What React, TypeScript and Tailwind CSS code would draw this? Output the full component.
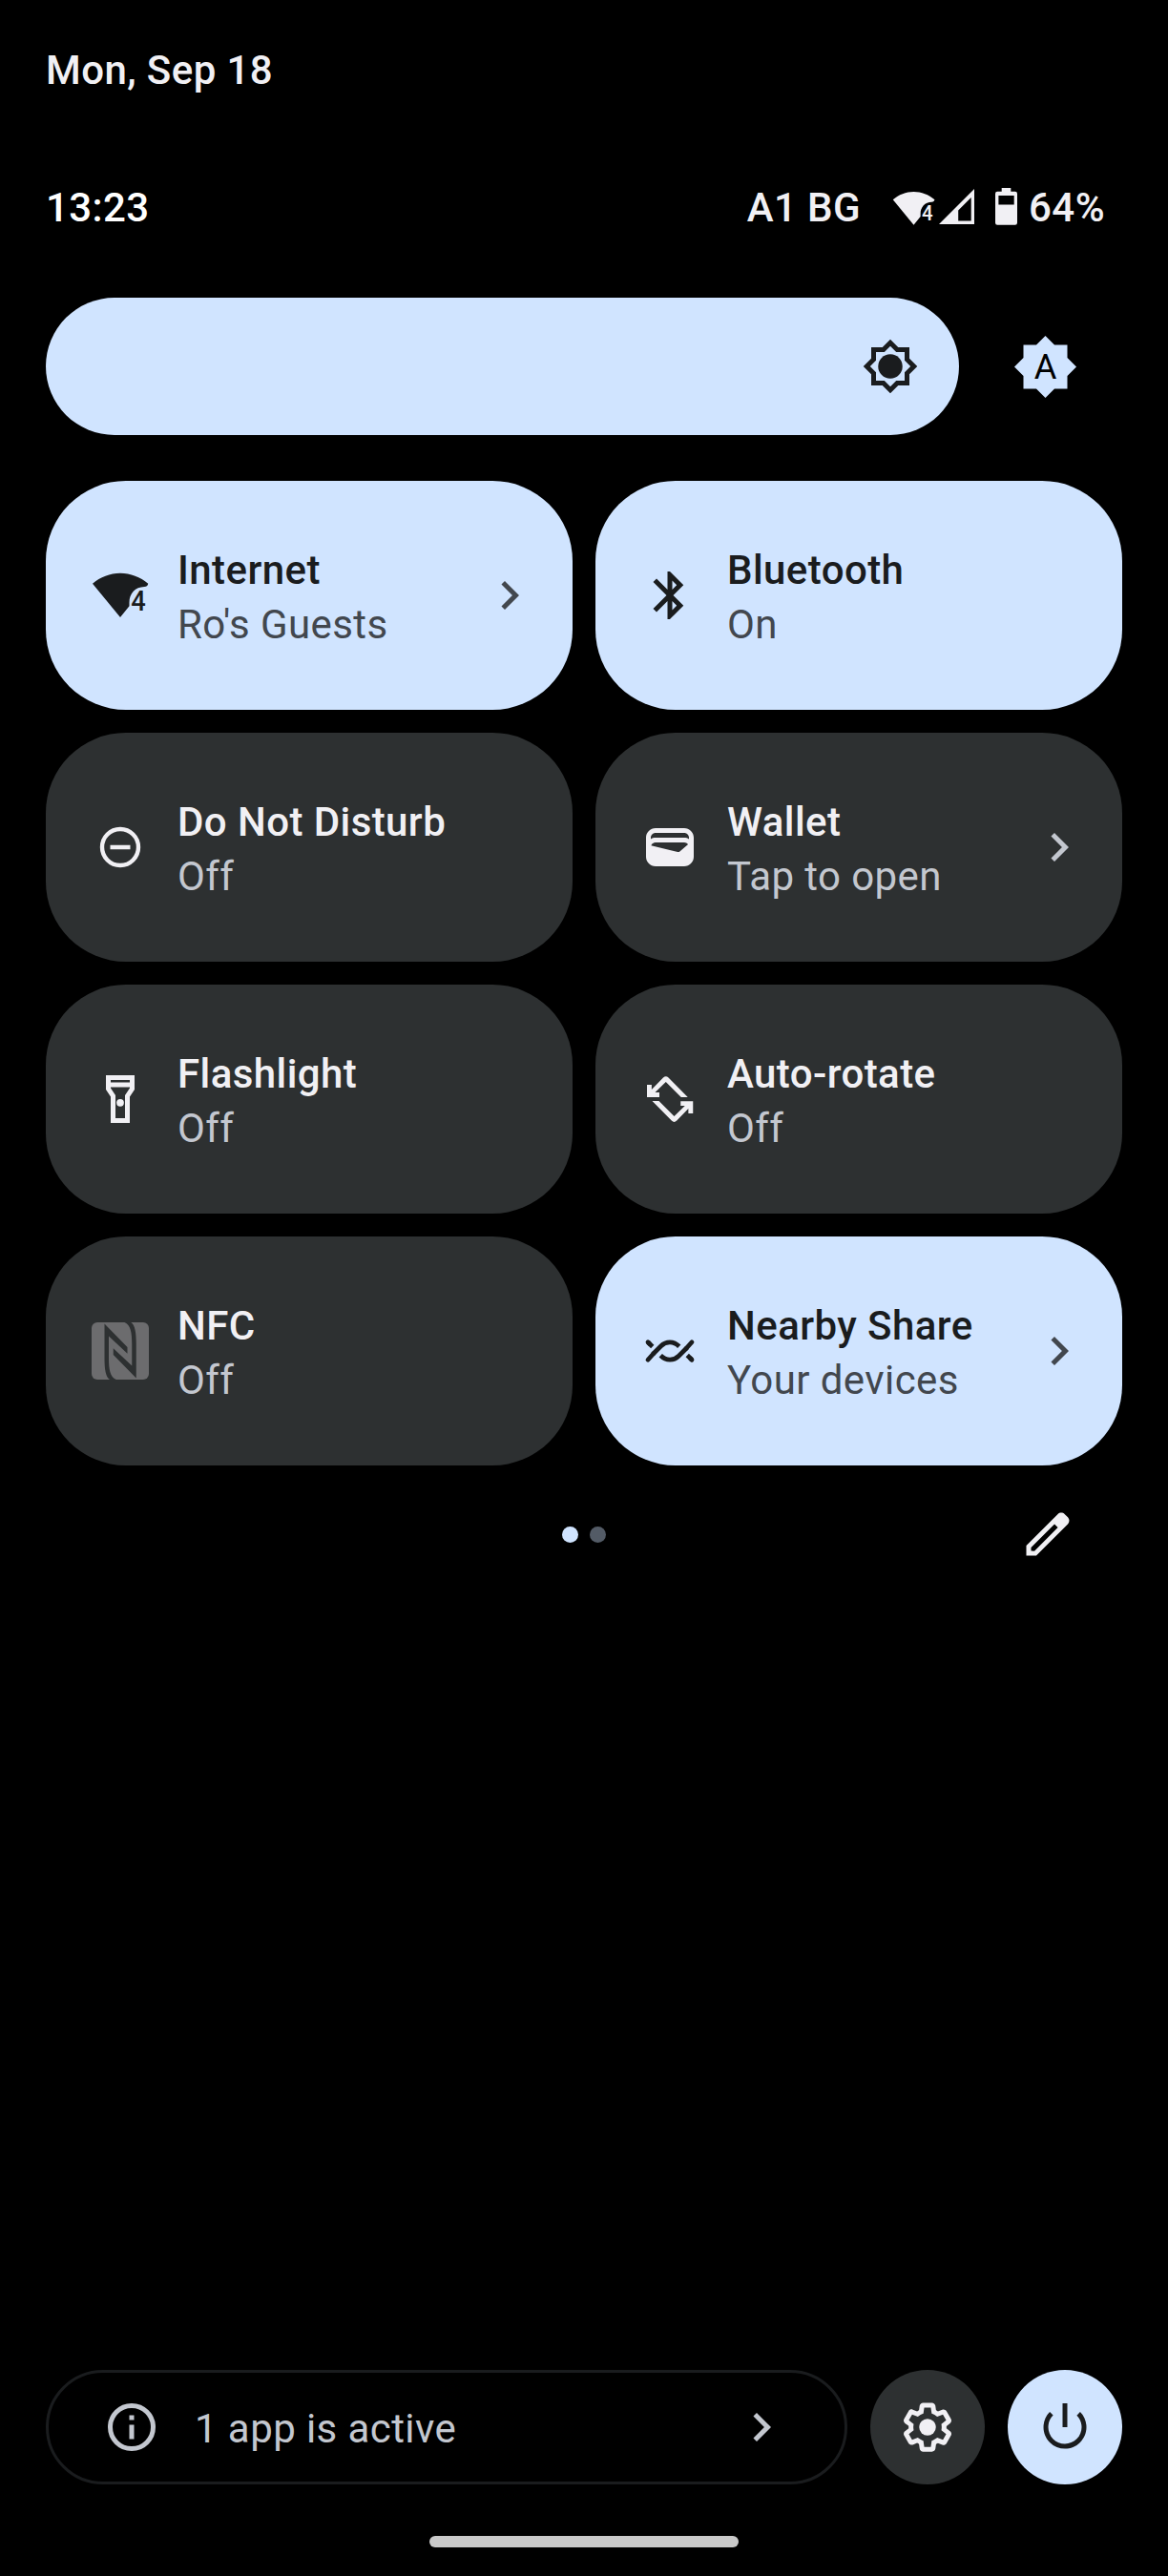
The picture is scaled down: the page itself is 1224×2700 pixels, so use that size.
import { ReactNode } from "react";
import clsx from "clsx";

type IconProps = { className?: string };

function Icon({ children, className = "size-[60px]" }: { children: ReactNode; className?: string }) {
  return (
    <svg viewBox="0 0 24 24" fill="currentColor" className={clsx("shrink-0", className)}>
      {children}
    </svg>
  );
}

function WifiIcon({ className }: IconProps) {
  return (
    <Icon className={className}>
      <path d="M12 21.2.4 7.1C3.7 4.3 7.7 2.7 12 2.7s8.4 1.6 11.7 4.4c-.2.9-.7 1.3-1.6 1.3-3.8.1-6.3 2.8-6.3 6.6v1.5z" />
      <text x="16.5" y="18.4" fontSize="11.6" fontWeight="500" fontFamily="Roboto, sans-serif" letterSpacing="0" textLength="6.2" lengthAdjust="spacingAndGlyphs">
        4
      </text>
    </Icon>
  );
}

function BluetoothIcon() {
  return (
    <Icon>
      <path d="M17.71 7.71 12 2h-1v7.59L6.41 5 5 6.41 10.59 12 5 17.59 6.41 19 11 14.41V22h1l5.71-5.71-4.3-4.29zM13 5.83l1.88 1.88L13 9.59zm1.88 10.46L13 18.17v-3.76z" />
    </Icon>
  );
}

function DndIcon() {
  return (
    <Icon>
      <circle cx="12" cy="12" r="7.6" fill="none" stroke="currentColor" strokeWidth="1.75" />
      <path d="M7.8 11.1h8.4v1.8H7.8z" />
    </Icon>
  );
}

function WalletIcon() {
  return (
    <Icon>
      <path d="M18 4H6C3.79 4 2 5.79 2 8v8c0 2.21 1.79 4 4 4h12c2.21 0 4-1.79 4-4V8C22 5.79 20.21 4 18 4zM16.14 13.77c-.24.2-.57.28-.88.2L4.15 11.25C4.45 10.52 5.16 10 6 10h12c.67 0 1.26.34 1.63.84zM6 6h12c1.1 0 2 .9 2 2v.55C19.41 8.21 18.73 8 18 8H6c-.73 0-1.41.21-2 .55V8C4 6.9 4.9 6 6 6z" />
    </Icon>
  );
}

function FlashlightIcon() {
  return (
    <Icon>
      <path d="M18 2H6v6l2 3v11h8V11l2-3zm-2 2v1H8V4zm-2 6.4V20h-4v-9.61l-2-3V7h8v.39z" />
      <circle cx="12" cy="13.5" r="1.55" />
    </Icon>
  );
}

function RotateIcon() {
  const half = "M2.4 6h1.95v2L9.2 3q1.1-1.1 2.2 0l8.1 8.2h-2.8l-6.4-6.4-4.5 4.4h1.8v1.95H2.4z";
  return (
    <Icon>
      <path d={half} />
      <path d={half} transform="rotate(180 12.05 12)" />
    </Icon>
  );
}

function NfcIcon() {
  const half = "M5.4.6 15 10.4v2.7L7.2 5.8V15c0 4.5.5 8 3.1 9H7.6C5.9 23 5.4 19.5 5.4 15z";
  return (
    <Icon>
      <rect width="24" height="24" rx="2.4" className="fill-[#6c6c6e]" />
      <g className="fill-[#2d3031]">
        <path d={half} />
        <path d={half} transform="rotate(180 12.05 12)" />
      </g>
    </Icon>
  );
}

function NearbyIcon() {
  return (
    <Icon>
      <g fill="none" stroke="currentColor" strokeWidth="1.9">
        <path d="M4.8 13.4 8.3 9.9c2.1-2.1 5.3-2.1 7.6.2M19.2 10.6l-3.5 3.5c-2.1 2.1-5.3 2.1-7.6-.2M2.8 8.3l1.9 1.9M21.2 15.7l-1.9-1.9" />
        <path strokeLinecap="round" d="m2.8 15.7 2.5-2.8M21.2 8.3l-2.5 2.8M2.8 8.3l.6.6M21.2 15.7l-.6-.6" />
      </g>
    </Icon>
  );
}

function ChevronIcon() {
  return (
    <Icon>
      <path d="M10 6 8.59 7.41 13.17 12l-4.58 4.59L10 18l6-6z" />
    </Icon>
  );
}

function BrightnessIcon() {
  return (
    <Icon>
      <path
        fillRule="evenodd"
        d="M20 8.69V4h-4.69L12 .69 8.69 4H4v4.69L.69 12 4 15.31V20h4.69L12 23.31 15.31 20H20v-4.69L23.31 12zm-2 5.79V18h-3.52L12 20.48 9.52 18H6v-3.52L3.52 12 6 9.52V6h3.52L12 3.52 14.48 6H18v3.52L20.48 12z"
      />
      <circle cx="12" cy="12" r="5.1" />
    </Icon>
  );
}

function AutoBrightnessIcon() {
  return (
    <Icon className="size-[69px]">
      <path d="M20 8.69V4h-4.69L12 .69 8.69 4H4v4.69L.69 12 4 15.31V20h4.69L12 23.31 15.31 20H20v-4.69L23.31 12z" />
      <text x="12" y="16.3" textAnchor="middle" fontSize="12.6" fontFamily="Roboto, sans-serif" letterSpacing="0" className="fill-black">
        A
      </text>
    </Icon>
  );
}

function EditIcon() {
  return (
    <Icon>
      <path d="m20.41 4.94-1.35-1.35c-.78-.78-2.05-.78-2.83 0L3 16.82V21h4.18L20.41 7.77c.79-.78.79-2.05 0-2.83zM6.41 19.06 5 19v-1.36l9.82-9.82 1.41 1.41z" />
    </Icon>
  );
}

function SettingsIcon() {
  return (
    <Icon>
      <path d="M13.85,22.25h-3.7c-0.74,0 -1.36,-0.54 -1.45,-1.27l-0.27,-1.89c-0.27,-0.14 -0.53,-0.29 -0.79,-0.46l-1.8,0.72c-0.7,0.26 -1.47,-0.03 -1.81,-0.65L2.2,15.53c-0.35,-0.66 -0.2,-1.44 0.36,-1.88l1.53,-1.19c-0.01,-0.15 -0.02,-0.3 -0.02,-0.46c0,-0.15 0.01,-0.31 0.02,-0.46l-1.52,-1.19C1.98,9.9 1.83,9.09 2.2,8.47l1.85,-3.19c0.34,-0.62 1.11,-0.9 1.79,-0.63l1.81,0.73c0.26,-0.17 0.52,-0.32 0.78,-0.46l0.27,-1.91c0.09,-0.7 0.71,-1.25 1.44,-1.25h3.7c0.74,0 1.36,0.54 1.45,1.27l0.27,1.89c0.27,0.14 0.53,0.29 0.79,0.46l1.8,-0.72c0.71,-0.26 1.48,0.03 1.82,0.65l1.84,3.18c0.36,0.66 0.2,1.44 -0.36,1.88l-1.52,1.19c0.01,0.15 0.02,0.3 0.02,0.46s-0.01,0.31 -0.02,0.46l1.52,1.19c0.56,0.45 0.72,1.23 0.37,1.86l-1.86,3.22c-0.34,0.62 -1.11,0.9 -1.8,0.63l-1.8,-0.72c-0.26,0.17 -0.52,0.32 -0.78,0.46l-0.27,1.91C15.21,21.71 14.59,22.25 13.85,22.25zM10.62,20.25h2.76l0.37,-2.55l0.53,-0.22c0.44,-0.18 0.88,-0.44 1.34,-0.78l0.45,-0.34l2.38,0.96l1.38,-2.4l-2.03,-1.58l0.07,-0.56c0.03,-0.26 0.06,-0.51 0.06,-0.78c0,-0.27 -0.03,-0.53 -0.06,-0.78l-0.07,-0.56l2.03,-1.58l-1.39,-2.4l-2.39,0.96l-0.45,-0.35c-0.42,-0.32 -0.87,-0.58 -1.33,-0.77L13.75,6.3l-0.37,-2.55h-2.76L10.25,6.3L9.72,6.51C9.28,6.7 8.84,6.95 8.38,7.3L7.93,7.63L5.55,6.68L4.16,9.07l2.03,1.58l-0.07,0.56C6.09,11.47 6.06,11.74 6.06,12c0,0.26 0.02,0.53 0.06,0.78l0.07,0.56l-2.03,1.58l1.38,2.4l2.39,-0.96l0.45,0.35c0.43,0.33 0.86,0.58 1.33,0.77l0.53,0.22L10.62,20.25z" />
      <circle cx="12" cy="12" r="3.5" />
    </Icon>
  );
}

function PowerIcon() {
  return (
    <Icon>
      <path d="M11 2h2v10h-2zM18.37 5.64l-1.41 1.41c2.73 2.73 2.72 7.16-.01 9.89-2.73 2.73-7.17 2.73-9.89.01-2.73-2.73-2.74-7.18-.01-9.91l-1.41-1.4c-3.51 3.51-3.51 9.21.01 12.73 3.51 3.51 9.21 3.51 12.72-.01 3.51-3.51 3.51-9.2 0-12.72z" />
    </Icon>
  );
}

function InfoIcon() {
  return (
    <Icon>
      <circle cx="12" cy="12" r="9" fill="none" stroke="currentColor" strokeWidth="2" />
      <path d="M11 7h2v2h-2zM11 11h2v6h-2z" />
    </Icon>
  );
}

function SignalIcon() {
  return (
    <svg viewBox="0 0 37 37" fill="currentColor" className="size-[37px]">
      <path fillRule="evenodd" d="M0 37 37 0v37zM20.2 22.5v11h13.5V9z" />
    </svg>
  );
}

function BatteryIcon() {
  return (
    <svg viewBox="0 0 23 39" fill="currentColor" className="h-[39px] w-[23px]">
      <path
        fillRule="evenodd"
        d="M6.7 0h9.6v3.8h4.5A2.2 2.2 0 0 1 23 6v30.5a2.2 2.2 0 0 1-2.2 2.2H2.2A2.2 2.2 0 0 1 0 36.5V6a2.2 2.2 0 0 1 2.2-2.2h4.5zM3.4 8v9.4h16.3V8z"
      />
    </svg>
  );
}

type Tile = {
  title: string;
  status: string;
  icon: ReactNode;
  active?: boolean;
  expandable?: boolean;
};

const tiles: Tile[] = [
  { title: "Internet", status: "Ro's Guests", icon: <WifiIcon />, active: true, expandable: true },
  { title: "Bluetooth", status: "On", icon: <BluetoothIcon />, active: true },
  { title: "Do Not Disturb", status: "Off", icon: <DndIcon /> },
  { title: "Wallet", status: "Tap to open", icon: <WalletIcon />, expandable: true },
  { title: "Flashlight", status: "Off", icon: <FlashlightIcon /> },
  { title: "Auto-rotate", status: "Off", icon: <RotateIcon /> },
  { title: "NFC", status: "Off", icon: <NfcIcon /> },
  { title: "Nearby Share", status: "Your devices", icon: <NearbyIcon />, active: true, expandable: true },
];

function QuickTile({ title, status, icon, active, expandable }: Tile) {
  return (
    <button
      className={clsx(
        "flex h-60 items-center rounded-[84px] pl-12 pr-9 text-left",
        active ? "bg-[#d0e4ff] text-[#1a1c1e]" : "bg-[#2d3031] text-[#f1f0f4]"
      )}
    >
      {icon}
      <div className="ml-[30px] flex-1 pt-1 leading-[57px]">
        <p className="font-medium">{title}</p>
        <p className={active ? "text-[#42474e]" : "text-[#c3c7cf]"}>{status}</p>
      </div>
      {expandable && (
        <span className={active ? "text-[#42474e]" : "text-[#c3c7cf]"}>
          <ChevronIcon />
        </span>
      )}
    </button>
  );
}

export default function App() {
  return (
    <div className="flex h-[2700px] w-[1224px] flex-col bg-black px-12 pt-[50px] font-['Roboto',sans-serif] text-[42px] leading-[48px] tracking-[0.01em] text-[#f1f0f4]">
      <p className="font-medium">Mon, Sep 18</p>

      <header className="mt-24 flex h-12 items-center pr-[18px] font-medium">
        <span className="text-white">13:23</span>
        <span className="ml-auto">A1 BG</span>
        <div className="ml-[33px] flex items-center">
          <WifiIcon className="size-[45px]" />
          <span className="-mt-1 ml-1">
            <SignalIcon />
          </span>
        </div>
        <span className="-mt-1 ml-[22px]">
          <BatteryIcon />
        </span>
        <span className="ml-3">64%</span>
      </header>

      <div className="mt-[70px] flex items-center">
        <div className="flex h-36 w-[957px] items-center justify-end rounded-full bg-[#d0e4ff] pr-[42px] text-[#1a1c1e]">
          <BrightnessIcon />
        </div>
        <button className="ml-14 text-[#d0e4ff]">
          <AutoBrightnessIcon />
        </button>
      </div>

      <main className="mt-12 grid grid-cols-2 gap-6">
        {tiles.map((tile) => (
          <QuickTile key={tile.title} {...tile} />
        ))}
      </main>

      <div className="grid h-36 grid-cols-3 items-center">
        <div className="col-start-2 flex justify-center gap-3">
          <span className="size-[17px] rounded-full bg-[#d0e4ff]" />
          <span className="size-[17px] rounded-full bg-[#535b66]" />
        </div>
        <button className="mr-12 justify-self-end">
          <EditIcon />
        </button>
      </div>

      <footer className="mt-auto flex gap-6">
        <button className="flex h-[120px] flex-1 items-center rounded-full border-[3px] border-[#1a1c1e] px-[57px] text-left text-[#c3c7cf]">
          <InfoIcon />
          <span className="ml-9 flex-1 pt-1">1 app is active</span>
          <ChevronIcon />
        </button>
        <button className="flex size-[120px] items-center justify-center rounded-full bg-[#2d3031]">
          <SettingsIcon />
        </button>
        <button className="flex size-[120px] items-center justify-center rounded-full bg-[#d0e4ff] text-[#1a1c1e]">
          <PowerIcon />
        </button>
      </footer>

      <div className="mb-[30px] mt-[54px] h-3 w-[324px] self-center rounded-full bg-[#c9c9c9]" />
    </div>
  );
}
